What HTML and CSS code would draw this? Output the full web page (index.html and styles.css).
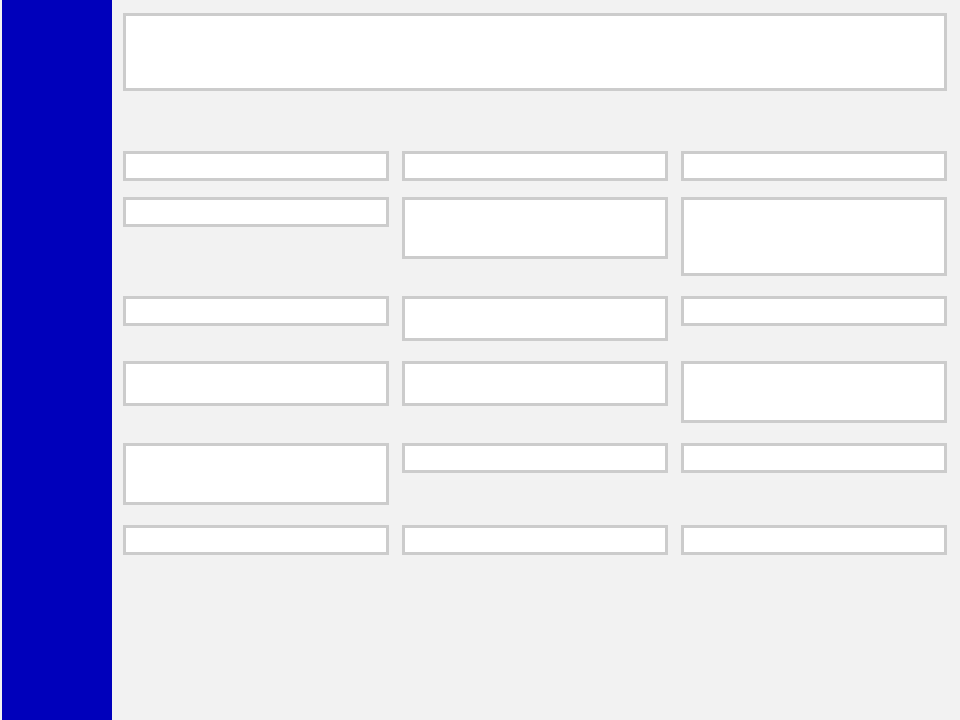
FILE: index.html
```html
<!DOCTYPE html>
<html>
<head>
<meta charset="utf-8">
<link rel="stylesheet" href="styles.css">
</head>
<body>
<div class="layout">
  <aside class="sidebar"></aside>
  <main class="main">
    <div class="header-box"></div>
    <div class="rows">
      <div class="row first">
        <div class="card h30"></div>
        <div class="card h30"></div>
        <div class="card h30"></div>
      </div>
      <div class="row">
        <div class="card h30"></div>
        <div class="card h62"></div>
        <div class="card h79"></div>
      </div>
      <div class="row">
        <div class="card h30"></div>
        <div class="card h45"></div>
        <div class="card h30"></div>
      </div>
      <div class="row">
        <div class="card h45"></div>
        <div class="card h45"></div>
        <div class="card h62"></div>
      </div>
      <div class="row">
        <div class="card h62"></div>
        <div class="card h30"></div>
        <div class="card h30"></div>
      </div>
      <div class="row">
        <div class="card h30"></div>
        <div class="card h30"></div>
        <div class="card h30"></div>
      </div>
    </div>
  </main>
</div>
</body>
</html>
```

FILE: styles.css
```css
html, body {
  margin: 0;
  padding: 0;
  height: 100%;
  background: #f2f2f2;
  font-family: "Liberation Sans", Arial, sans-serif;
}
.layout {
  display: flex;
  height: 720px;
  padding-left: 2px;
}
.sidebar {
  width: 110px;
  flex: none;
  background: #0000bb;
}
.main {
  flex: 1;
  padding: 13px 13px 0 11px;
}
.header-box {
  box-sizing: border-box;
  height: 78px;
  background: #ffffff;
  border: 3px solid #cccccc;
}
.rows {
  margin-top: 60px;
  display: flex;
  flex-direction: column;
  gap: 20px;
}
.row {
  display: grid;
  grid-template-columns: repeat(3, 1fr);
  column-gap: 13px;
  align-items: start;
}
.row.first {
  margin-bottom: -4px;
}
.card {
  box-sizing: border-box;
  background: #ffffff;
  border: 3px solid #cccccc;
}
.h30 { height: 30px; }
.h45 { height: 45px; }
.h62 { height: 62px; }
.h79 { height: 79px; }
```
